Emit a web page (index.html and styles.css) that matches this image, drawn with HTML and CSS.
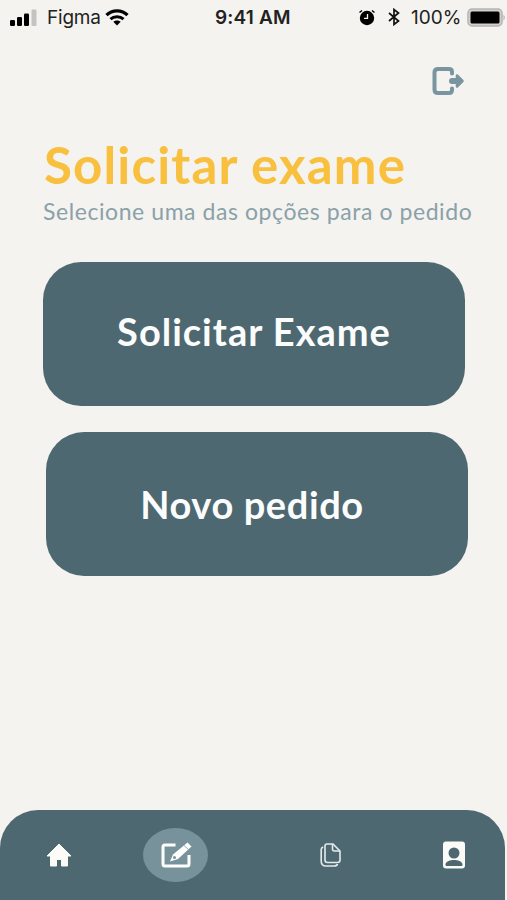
FILE: index.html
```html
<!DOCTYPE html>
<html lang="pt-BR">
<head>
    <meta charset="UTF-8">
    <meta name="viewport" content="width=device-width, initial-scale=1.0">
    <title>Solicitar exame</title>
    <link rel="stylesheet" href="styles.css">
</head>
<body>

<div class="screen">
    <!-- Status bar -->
    <div class="status-bar">
        <div class="status-left">
            <svg class="signal" width="27" height="17" viewBox="0 0 27 17">
                <rect x="0" y="11" width="5" height="6" rx="1.2"/>
                <rect x="7" y="8" width="5" height="9" rx="1.2"/>
                <rect x="14" y="4.5" width="5" height="12.5" rx="1.2"/>
                <rect x="21.5" y="0.5" width="5" height="16.5" rx="1.2" fill="#c3c3c1"/>
            </svg>
            <span class="carrier">Figma</span>
            <svg class="wifi" width="24" height="17" viewBox="0 0 24 17">
                <path d="M1.500 6.200C7 0.500 17 0.500 22.500 6.200" fill="none" stroke="#000" stroke-width="3.200"/>
                <path d="M5.500 10.200C9 6.800 15 6.800 18.500 10.200" fill="none" stroke="#000" stroke-width="3"/>
                <path d="M8.300 12.800C10.400 11 13.600 11 15.700 12.800L12 16.500z"/>
            </svg>
        </div>
        <span class="time">9:41 AM</span>
        <div class="status-right">
            <svg class="alarm" width="18" height="17" viewBox="0 0 18 17">
                <circle cx="9" cy="9" r="7.200"/>
                <path d="M1.500 3.500L4 1.500M16.500 3.500L14 1.500" stroke="#000" stroke-width="1.500"/>
                <path d="M9.500 5V9.400H6" fill="none" stroke="#f4f3ef" stroke-width="1.300"/>
            </svg>
            <svg class="bluetooth" width="12" height="18" viewBox="0 0 12 18">
                <path d="M1 5L10.500 13L6 16.500V1.500L10.500 5L1 13" fill="none" stroke="#111" stroke-width="1.700"/>
            </svg>
            <span class="percent">100%</span>
            <svg class="battery" width="39" height="19" viewBox="0 0 39 19">
                <rect x="1" y="1" width="34" height="17" rx="4" fill="#d0d0ce" stroke="#b4b4b2" stroke-width="1.500"/>
                <rect x="3.500" y="3.500" width="29" height="12" rx="1.500"/>
                <path d="M36.500 6.500Q39 9.500 36.500 12.500z" fill="#aaaaa8"/>
            </svg>
        </div>
    </div>

    <!-- Header -->
    <div class="top">
        <a class="logout" href="#" aria-label="Sair">
            <svg width="34" height="30" viewBox="0 0 34 30">
                <path d="M21 7.500V6Q21 3 18 3H7Q3.500 3 3.500 6.500V23.500Q3.500 27 7 27H18Q21 27 21 24V22.500" fill="none" stroke="#7895a0" stroke-width="4" stroke-linecap="round"/>
                <path d="M21 15H27" stroke="#7895a0" stroke-width="6" stroke-linecap="round"/>
                <path d="M26 9.500L31.500 15L26 20.500z" fill="#7895a0" stroke="#7895a0" stroke-width="2.500" stroke-linejoin="round"/>
            </svg>
        </a>
    </div>
    <h1 class="title">Solicitar exame</h1>
    <p class="subtitle">Selecione uma das opções para o pedido</p>

    <!-- Options -->
    <div class="options">
        <button class="option">Solicitar Exame</button>
        <button class="option option-new">Novo pedido</button>
    </div>

    <!-- Bottom navigation -->
    <nav class="nav">
        <a class="nav-item" href="#" aria-label="Início">
            <svg width="26" height="24" viewBox="0 0 26 24">
                <path d="M13 1L25 13H21.500V23H15.500V16.500H10.500V23H4.500V13H1z" fill="#fbfbf8" stroke="#fbfbf8" stroke-linejoin="round"/>
            </svg>
        </a>
        <a class="nav-item active" href="#" aria-label="Solicitar">
            <svg width="32" height="28" viewBox="0 0 32 28">
                <path d="M15.500 4H5Q3 4 3 6V23Q3 25 5 25H27Q29 25 29 23V14" fill="none" stroke="#fff" stroke-width="3"/>
                <path d="M27.500 1.500L31.500 5.500L18 18L10 20.500L13 13.500z" fill="#fff"/>
                <path d="M24 4.500L28.500 8.500" stroke="#78929b" stroke-width="0.800"/>
                <circle cx="14.500" cy="16.500" r="1.500" fill="#78929b"/>
            </svg>
        </a>
        <a class="nav-item" href="#" aria-label="Documentos">
            <svg width="22" height="24" viewBox="0 0 22 24" fill="none" stroke="#e4eaec" stroke-width="1.600">
                <path d="M7 1H13L20 8V17Q20 19.500 17.500 19.500H7.500Q5 19.500 5 17V3Q5 1 7 1z"/>
                <path d="M12.500 1V6Q12.500 8 14.500 8H20"/>
                <path d="M3.200 4Q1.200 4.800 1.200 6.500V18Q1.200 23 6 23H14Q17 23 17.500 21"/>
            </svg>
        </a>
        <a class="nav-item" href="#" aria-label="Perfil">
            <svg width="24" height="28" viewBox="0 0 24 28">
                <rect x="1" y="0.500" width="22" height="27" rx="3" fill="#fbfbf8"/>
                <circle cx="12" cy="12" r="5.500" fill="#4e6871"/>
                <path d="M3.500 24V23C5 17.800 19 17.800 20.500 23V24Q20.500 25 19.500 25H4.500Q3.500 25 3.500 24z" fill="#4e6871"/>
            </svg>
        </a>
    </nav>
</div>

</body>
</html>
```
FILE: styles.css
```css
/* Basic Reset */
* {
    margin: 0;
    padding: 0;
    box-sizing: border-box;
}
body {
    font-family: Lato, "Open Sans", sans-serif;
    background: #f4f3ef;
}
svg {
    display: block;
}
.screen {
    height: 900px;
    width: 507px;
    display: flex;
    flex-direction: column;
    overflow: hidden;
}
/* Status bar */
.status-bar {
    height: 34px;
    display: grid;
    grid-template-columns: 215px 143px 149px;
    align-items: center;
    font-family: Inter, sans-serif;
    font-size: 19px;
    color: #222;
}
.status-left,
.status-right {
    display: flex;
    align-items: center;
}
.status-left {
    padding-left: 10px;
}
.carrier {
    margin: 0 4px 0 10px;
    letter-spacing: -0.2px;
}
.time {
    font-weight: 600;
    letter-spacing: 0.2px;
}
.bluetooth {
    margin: 0 11px 0 12px;
}
.percent {
    width: 56px;
}
/* Header */
.top {
    height: 104px;
    padding: 32px 42px 0 0;
    display: flex;
    justify-content: flex-end;
}
.logout {
    height: 30px;
}
.title {
    height: 55px;
    line-height: 54px;
    padding-left: 44px;
    font-size: 51px;
    font-weight: 700;
    letter-spacing: 1.15px;
    color: #f8c03e;
    white-space: nowrap;
}
.subtitle {
    height: 36px;
    line-height: 36px;
    padding-left: 43px;
    font-size: 23px;
    letter-spacing: 0.57px;
    color: #8aa1a9;
    white-space: nowrap;
}
/* Options */
.options {
    margin-top: 33px;
    padding-left: 43px;
    display: flex;
    flex-direction: column;
    gap: 26px;
}
.option {
    width: 422px;
    height: 144px;
    padding-bottom: 6px;
    border: none;
    border-radius: 38px;
    background: #4e6871;
    color: #fbfcfc;
    font-family: inherit;
    font-size: 38px;
    font-weight: 700;
    letter-spacing: 1px;
    cursor: pointer;
}
.option-new {
    margin-left: 3px;
    padding: 0 10px 1px 0;
    letter-spacing: 0.6px;
}
/* Bottom navigation */
.nav {
    height: 90px;
    width: 505px;
    margin-top: auto;
    padding-left: 26px;
    border-radius: 38px 38px 0 0;
    background: #4e6871;
    display: grid;
    grid-template-columns: 65px 169px 142px 103px;
    align-items: center;
    justify-items: center;
}
.nav-item.active {
    width: 65px;
    height: 54px;
    border-radius: 50%;
    background: #78929b;
    display: flex;
    align-items: center;
    justify-content: center;
}
```
